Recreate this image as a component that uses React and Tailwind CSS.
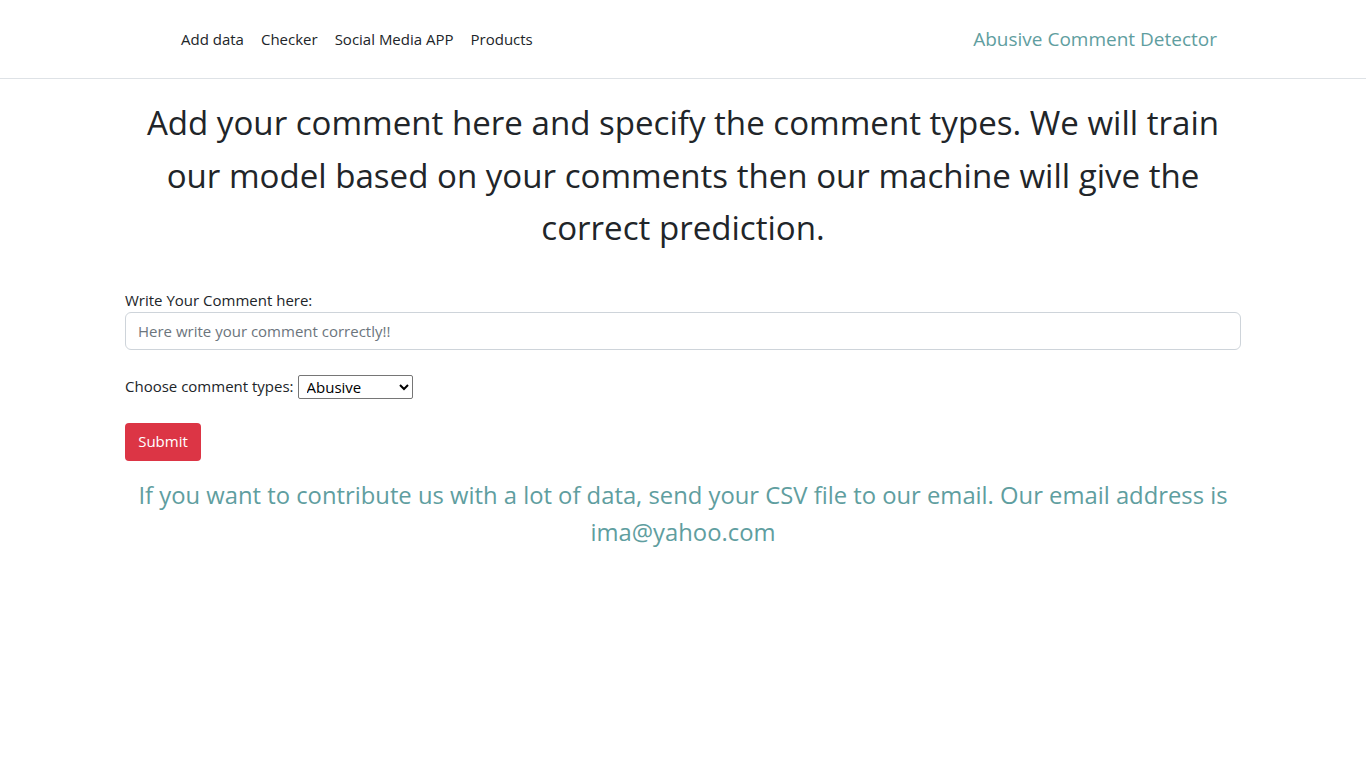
export default function App() {
  const font = { fontFamily: '"Open Sans", "Noto Sans", sans-serif' };
  return (
    <div className="min-h-screen bg-white text-[#212529]" style={font}>
      {/* Navbar */}
      <nav className="h-[79px] border-b border-[#dee2e6] flex items-center justify-between pl-[181px] pr-[149px]">
        <ul className="flex items-center gap-[17px] text-[15px] text-[#212529]">
          <li><a href="#">Add data</a></li>
          <li><a href="#">Checker</a></li>
          <li><a href="#">Social Media APP</a></li>
          <li><a href="#">Products</a></li>
        </ul>
        <a href="#" className="text-[19px] text-[#5f9ea0]">Abusive Comment Detector</a>
      </nav>

      <div className="w-[1140px] mx-auto px-3">
        <h2 className="text-center text-[33.1px] leading-[52.5px] mt-[18px]">
          Add your comment here and specify the comment types. We will train our model based on your comments then our machine will give the correct prediction.
        </h2>

        <form className="mt-[33px]" onSubmit={(e) => e.preventDefault()}>
          <label htmlFor="comment" className="block text-[15px] leading-6">Write Your Comment here:</label>
          <input
            id="comment"
            type="text"
            placeholder="Here write your comment correctly!!"
            className="block w-full h-[38px] px-3 border border-[#ced4da] rounded-[6px] text-[15px] placeholder:text-[#6c757d] outline-none"
          />

          <div className="mt-[25px] flex items-center text-[15px]">
            <label htmlFor="type" className="mr-1">Choose comment types:</label>
            <select
              id="type"
              className="w-[115px] h-[24px] border border-[#767676] rounded-[2px] text-[15px] text-black px-1"
            >
              <option>Abusive</option>
              <option>Not Abusive</option>
            </select>
          </div>

          <button
            type="submit"
            className="mt-[24px] h-[38px] w-[76px] bg-[#dc3545] text-white text-[15px] rounded-[4px]"
          >
            Submit
          </button>
        </form>

        <h4 className="text-center text-[23.8px] leading-[37px] text-[#5f9ea0] mt-[16px]">
          If you want to contribute us with a lot of data, send your CSV file to our email. Our email address is ima@yahoo.com
        </h4>
      </div>
    </div>
  );
}
